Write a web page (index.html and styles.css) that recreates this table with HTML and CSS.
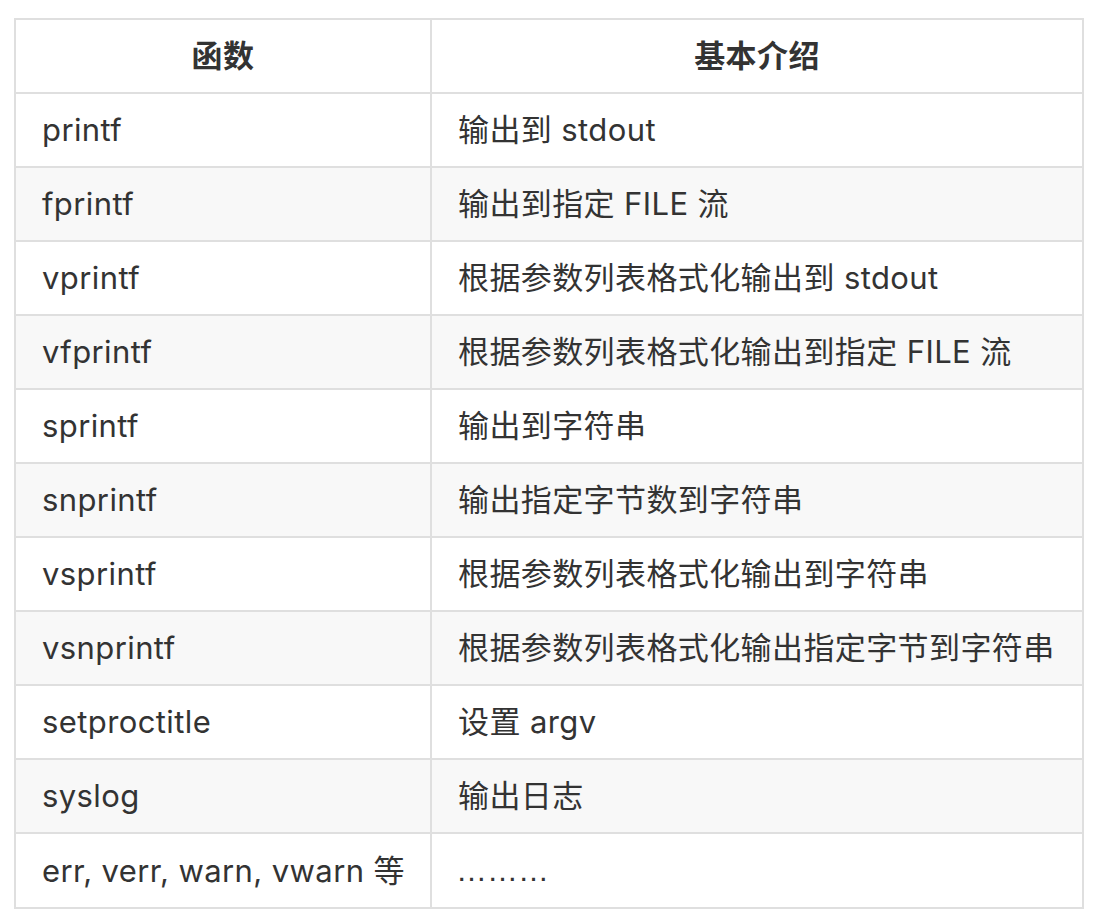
FILE: index.html
```html
<!DOCTYPE html>
<html lang="zh-CN">
<head>
<meta charset="utf-8">
<link rel="stylesheet" href="styles.css">
</head>
<body>
<div class="wrap">
<table class="fn-table">
<colgroup><col class="c1"><col class="c2"></colgroup>
<thead>
<tr><th>函数</th><th>基本介绍</th></tr>
</thead>
<tbody>
<tr><td>printf</td><td>输出到 stdout</td></tr>
<tr><td>fprintf</td><td>输出到指定 FILE 流</td></tr>
<tr><td>vprintf</td><td>根据参数列表格式化输出到 stdout</td></tr>
<tr><td>vfprintf</td><td>根据参数列表格式化输出到指定 FILE 流</td></tr>
<tr><td>sprintf</td><td>输出到字符串</td></tr>
<tr><td>snprintf</td><td>输出指定字节数到字符串</td></tr>
<tr><td>vsprintf</td><td>根据参数列表格式化输出到字符串</td></tr>
<tr><td>vsnprintf</td><td>根据参数列表格式化输出指定字节到字符串</td></tr>
<tr><td>setproctitle</td><td>设置 argv</td></tr>
<tr><td>syslog</td><td>输出日志</td></tr>
<tr><td>err, verr, warn, vwarn 等</td><td><span class="dots">………</span></td></tr>
</tbody>
</table>
</div>
</body>
</html>
```
FILE: styles.css
```css
html, body {
  margin: 0;
  padding: 0;
  background: #ffffff;
}
.wrap {
  padding: 18px 0 0 14px;
}
.fn-table {
  border-collapse: collapse;
  table-layout: fixed;
  width: 1068px;
  font-family: "Inter", "Noto Sans CJK SC", sans-serif;
  font-size: 31px;
  letter-spacing: 0.4px;
  color: #333333;
}
.c1 { width: 416px; }
.c2 { width: 652px; }
.fn-table th,
.fn-table td {
  border: 2px solid #dfdfdf;
  padding: 12px 26px;
  line-height: 48px;
  text-align: left;
  white-space: nowrap;
}
.fn-table th {
  text-align: center;
  font-weight: 700;
}
.fn-table tbody tr:nth-child(even) {
  background: #f8f8f8;
}
.dots {
  font-family: "Liberation Sans", sans-serif;
  letter-spacing: 0;
  margin-left: -2px;
}
```
